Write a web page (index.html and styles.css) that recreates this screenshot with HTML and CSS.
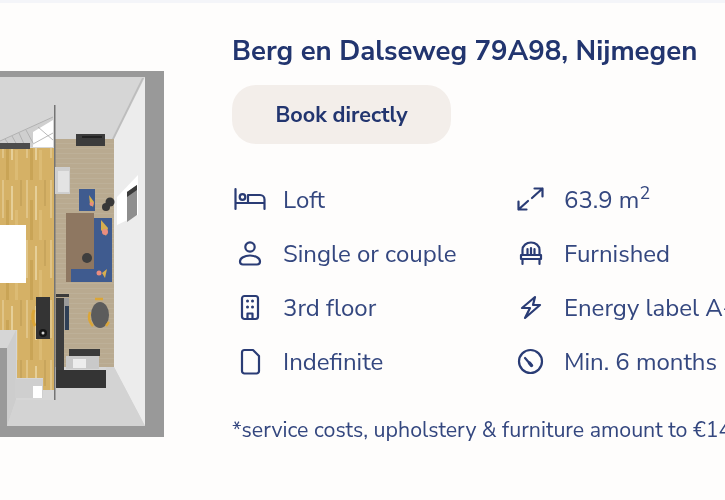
FILE: index.html
```html
<!DOCTYPE html>
<html lang="en">
<head>
<meta charset="utf-8">
<title>Berg en Dalseweg 79A98, Nijmegen</title>
<link rel="stylesheet" href="styles.css">
</head>
<body>
<div class="topline"></div>
<main class="listing">
  <svg class="plan" viewBox="0 71 164 366" width="164" height="366" aria-label="Floor plan">
    <defs>
      <pattern id="wood" width="24" height="60" patternUnits="userSpaceOnUse">
        <rect width="24" height="60" fill="#d5b166"/>
        <rect x="2" width="2" height="38" fill="#e0c487"/>
        <rect x="6" y="20" width="3" height="40" fill="#c9a456"/>
        <rect x="11" y="6" width="2" height="34" fill="#e6cf98"/>
        <rect x="15" y="30" width="3" height="30" fill="#dcbb74"/>
        <rect x="20" width="2" height="26" fill="#c8a55c"/>
      </pattern>
      <pattern id="tan" width="10" height="5" patternUnits="userSpaceOnUse">
        <rect width="10" height="5" fill="#b9aa90"/>
        <rect y="3" width="10" height="1" fill="#bdb098"/>
      </pattern>
    </defs>
    <g class="plan-art">
      <rect x="0" y="71" width="164" height="366" fill="#999999"/>
      <rect x="0" y="77" width="145" height="349" fill="#d6d6d6"/>
      <polygon points="145,77 145,426 114,367 114,139" fill="#ececec"/>
      <polygon points="144,78 114,139 112,139 142,78" fill="#bdbdbd"/>
      <rect x="55" y="139" width="59" height="228" fill="url(#tan)"/>
      <rect x="0" y="148" width="54" height="242" fill="url(#wood)"/>
      <rect x="0" y="330" width="17" height="60" fill="#d6d6d6"/>
      <rect x="17" y="378" width="26" height="12" fill="#d6d6d6"/>
      <rect x="0" y="348" width="7" height="78" fill="#9a9a9a"/>
      <polygon points="7,348 16,330 16,400 7,426" fill="#cdcdcd"/>
      <polygon points="7,426 145,426 114,367 106,367 106,388 55,388 55,400 16,400" fill="#d3d3d3"/>
      <polygon points="0,141 53,117 53,147 0,147" fill="#cfcfcf"/>
      <polygon points="33,132 53,120 53,147 33,147" fill="#ffffff"/>
      <path d="M0 141 L53 117 M5 139 L10 146 M12 136 L17 145 M19 133 L24 144 M26 130 L33 143 M33 144 L53 133 M38 127 L53 140" stroke="#a9a9a9" stroke-width=".8" fill="none"/>
      <rect x="0" y="143" width="30" height="6" fill="#4c4c4c"/>
      <rect x="54" y="105" width="1.500" height="295" fill="#747474"/>
      <rect x="76" y="134" width="29" height="12" fill="#3c3c3c"/>
      <rect x="82" y="136" width="20" height="2" fill="#222222"/>
      <rect x="55" y="167" width="15" height="27" fill="#cfcfcf"/>
      <rect x="58" y="171" width="11" height="21" fill="#e3e3e3"/>
      <rect x="0" y="225" width="26" height="58" fill="#ffffff"/>
      <rect x="79" y="189" width="16" height="22" fill="#3f5b8f"/>
      <path d="M89 195 L94 202 L93 207 L90 204Z" fill="#d7ae4e"/>
      <circle cx="91.500" cy="204" r="2" fill="#ea8d7f"/>
      <circle cx="110" cy="202" r="4.500" fill="#383838"/>
      <circle cx="106" cy="207" r="4" fill="#383838"/>
      <rect x="66" y="213" width="28" height="69" fill="#8e7761"/>
      <rect x="94" y="218" width="18" height="64" fill="#3f5b8f"/>
      <rect x="71" y="269" width="41" height="13" fill="#3f5b8f"/>
      <path d="M101 220 L108 228 L106 236 L101 230Z" fill="#d7ae4e"/>
      <circle cx="105" cy="232" r="3" fill="#ea8d7f"/>
      <circle cx="87" cy="258" r="5" fill="#3e3e3e"/>
      <circle cx="99" cy="273" r="2.500" fill="#ea8d7f"/>
      <path d="M102 273 L107 269 L105 278Z" fill="#d7ae4e"/>
      <ellipse cx="100" cy="315" rx="9" ry="13" fill="#5c5c5c"/>
      <path d="M90 312 Q87 320 93 326 M95 299 L103 299 M106 326 L109 322" stroke="#dba637" stroke-width="2.500" fill="none"/>
      <path d="M34 310 Q31 318 35 326" stroke="#dba637" stroke-width="3" fill="none"/>
      <rect x="36" y="297" width="14" height="42" fill="#343434"/>
      <circle cx="43" cy="333" r="4" fill="#161616"/>
      <circle cx="43" cy="333" r="1.500" fill="#d0d0d0"/>
      <rect x="56" y="294" width="13" height="3" fill="#3b3b3b"/>
      <rect x="64" y="298" width="5" height="32" fill="#9b9b9b"/>
      <rect x="65" y="306" width="4" height="24" fill="#2f3f55"/>
      <rect x="69" y="349" width="31" height="7" fill="#3a3a3a"/>
      <rect x="66" y="356" width="33" height="13" fill="#c9c9c9"/>
      <rect x="73" y="359" width="13" height="9" fill="#ededed"/>
      <rect x="56" y="298" width="8" height="90" fill="#3d3d3d"/>
      <rect x="56" y="370" width="50" height="18" fill="#343434"/>
      <rect x="15" y="379" width="28" height="19" fill="#cfcfcf"/>
      <rect x="33" y="386" width="9" height="12" fill="#ffffff"/>
      <polygon points="117,197 138,175 138,215 117,225" fill="#ffffff"/>
      <polygon points="127,192 137,185 137,215 127,222" fill="#8e8e8e"/>
      <polygon points="127,192 137,185 137,190 127,197" fill="#3a3a3a"/>
    </g>
  </svg>
  <section class="info">
    <h1 class="title">Berg en Dalseweg 79A98, Nijmegen</h1>
    <a class="book" href="#">Book directly</a>
    <ul class="facts">
      <li class="fact">
        <svg class="icon" viewBox="0 0 32 24"><path d="M1.500 1v20M1.500 15h29v6M14 15V7h12a4.500 4.500 0 0 1 4.500 4.500V15"/><circle cx="8.500" cy="9" r="2.800"/></svg>
        <span>Loft</span>
      </li>
      <li class="fact">
        <svg class="icon" viewBox="0 0 32 24"><circle cx="16" cy="5" r="4.700"/><path d="M9 22.500h14a3 3 0 0 0 3-3c0-3.500-4.500-6-10-6s-10 2.500-10 6a3 3 0 0 0 3 3z"/></svg>
        <span>Single or couple</span>
      </li>
      <li class="fact">
        <svg class="icon" viewBox="0 0 32 24"><rect x="8" y="0" width="16" height="23" rx="2.500"/><path d="M13.500 23v-5.500h5V23"/><path class="dots" d="M13.500 5h.01M18.500 5h.01M13.500 11h.01M18.500 11h.01"/></svg>
        <span>3rd floor</span>
      </li>
      <li class="fact">
        <svg class="icon" viewBox="0 0 32 24"><path d="M10.500 0H19l6 6V21a2.500 2.500 0 0 1-2.500 2.500h-12A2.500 2.500 0 0 1 8 21V2.500A2.500 2.500 0 0 1 10.500 0z"/></svg>
        <span>Indefinite</span>
      </li>
      <li class="fact">
        <svg class="icon" viewBox="0 0 32 24"><path d="M17 10 27.500.5M19.500.5h8v8M13 13 3.500 21.500M3.500 13.500v8h8"/></svg>
        <span>63.9 m<sup class="sq">2</sup></span>
      </li>
      <li class="fact">
        <svg class="icon" viewBox="0 0 32 24"><path d="M7.500 13V8a8.500 7.500 0 0 1 17 0v5M12.500 7v6M16 6v7M19.500 7v6M6 13h20v4H6zM7.500 17v5M24.500 17v5"/></svg>
        <span>Furnished</span>
      </li>
      <li class="fact">
        <svg class="icon" viewBox="0 0 32 24"><path d="M20 1 7 12H15L10 22 25 9H18Z"/></svg>
        <span>Energy label A+</span>
      </li>
      <li class="fact">
        <svg class="icon" viewBox="0 0 32 24"><circle cx="15.500" cy="11.500" r="11.500"/><path d="M10 8l6.500 7.500"/><path class="needle" d="M14.500 13l2 2.500"/></svg>
        <span>Min. 6 months</span>
      </li>
    </ul>
    <p class="note">*service costs, upholstery &amp; furniture amount to €140 per month</p>
  </section>
</main>
</body>
</html>
```
FILE: styles.css
```css
* { box-sizing: border-box; }
html, body { margin: 0; height: 100%; }
body {
  background: #fefdfc;
  color: #34477f;
  font-family: "Nunito Sans", Lato, "Noto Sans", sans-serif;
  overflow: hidden;
  width: 725px;
  height: 500px;
}
.topline { height: 3px; background: #f4f5f9; }
.listing { display: flex; align-items: flex-start; }
.plan { flex: none; margin-top: 68px; display: block; }
.plan-art { filter: blur(0.7px); }
.info { flex: none; width: 493px; margin-left: 68px; padding-top: 31px; white-space: nowrap; overflow: hidden; filter: blur(0.3px); }
.title { margin: 0; font-size: 27.6px; line-height: 34px; font-weight: 700; color: #22356f; }
.book {
  display: flex; align-items: center; justify-content: center;
  width: 219px; height: 59px; margin-top: 17px;
  border-radius: 24px; background: #f3eeea;
  color: #22356f; font-size: 21.6px; font-weight: 700; text-decoration: none;
}
.facts {
  list-style: none; margin: 29px 0 0; padding: 0;
  display: grid; grid-template-columns: 281px 1fr;
  grid-template-rows: repeat(4, 54px); grid-auto-flow: column;
}
.fact { display: flex; align-items: center; gap: 17px; font-size: 24px; }
.icon { width: 32px; height: 24px; flex: none; margin-left: 2px; overflow: visible; fill: none; stroke: #2a3c75; stroke-width: 2.2; stroke-linecap: round; stroke-linejoin: round; }
.dots { stroke-width: 3; }
.needle { stroke-width: 3.5; }
.sq { font-size: 18px; line-height: 0; vertical-align: 9px; }
.note { margin: 27px 0 0; font-size: 21.35px; line-height: 28px; }
```
